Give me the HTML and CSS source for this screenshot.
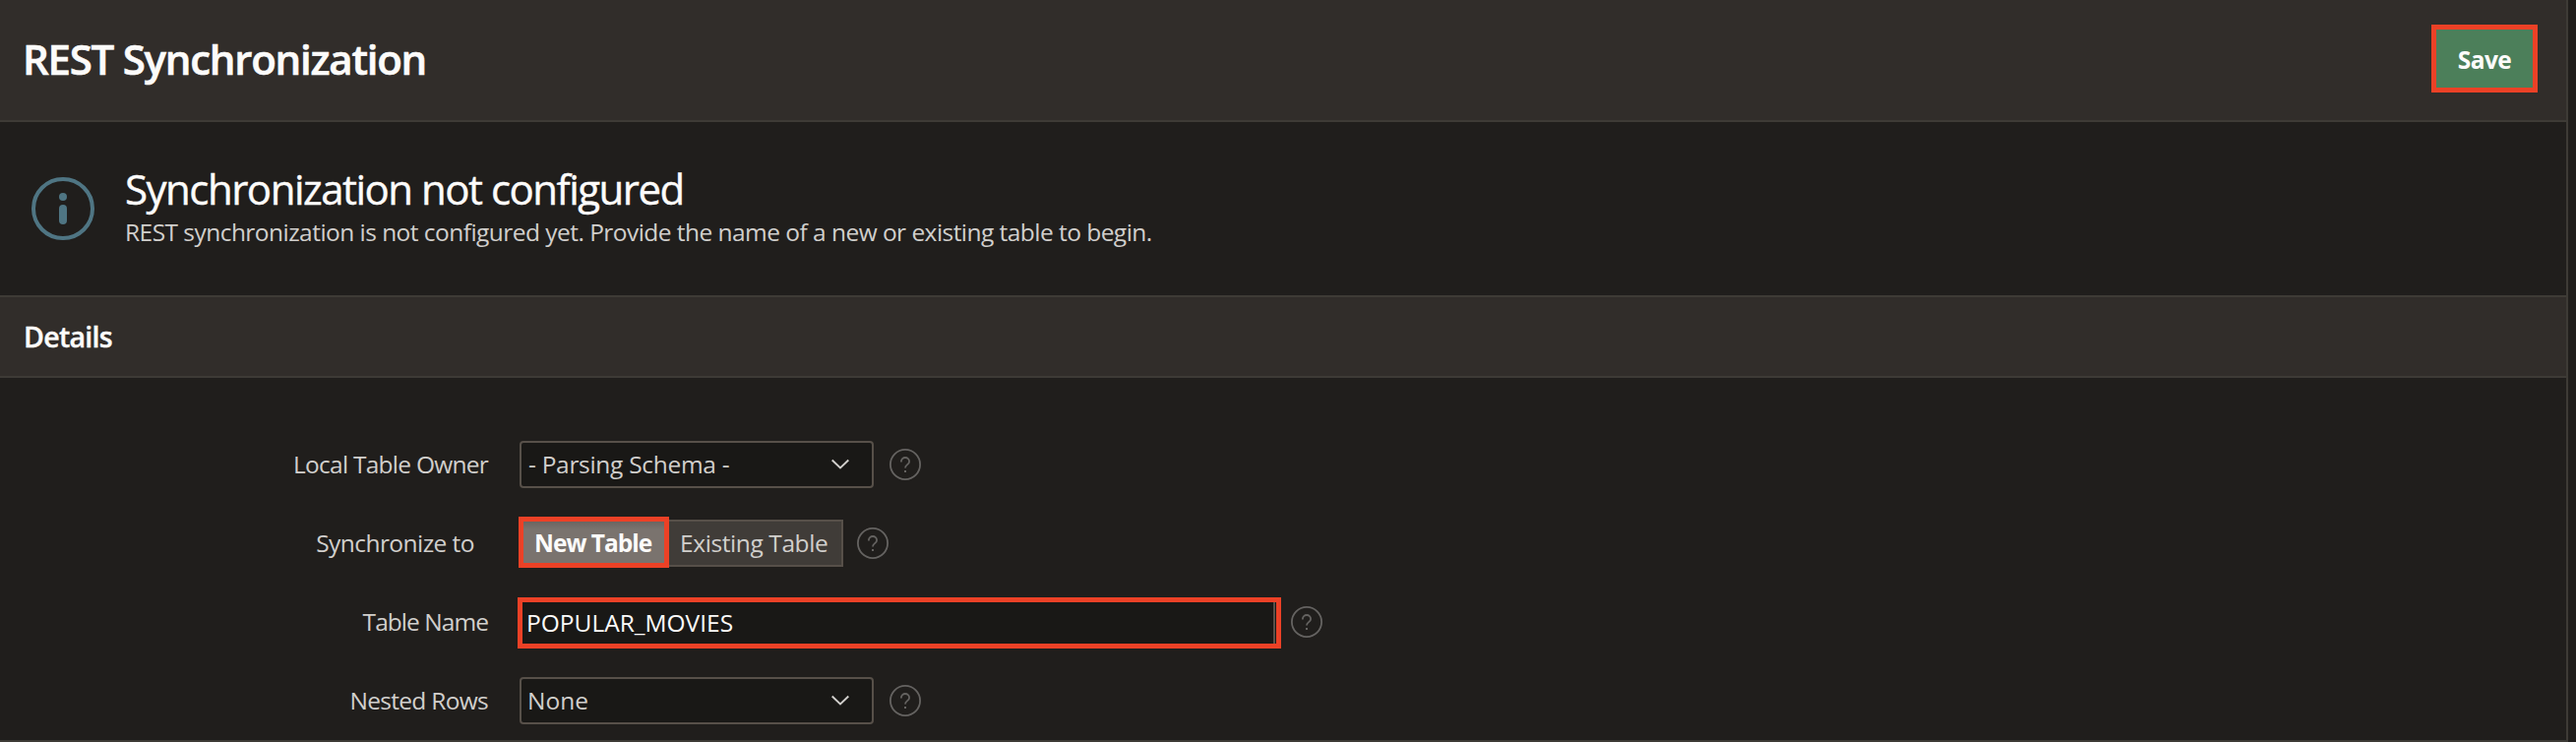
FILE: index.html
```
<!DOCTYPE html>
<html lang="en">
<head>
<meta charset="utf-8">
<title>REST Synchronization</title>
<link rel="stylesheet" href="styles.css">
</head>
<body>
<svg width="0" height="0" class="defs">
  <symbol id="help" viewBox="0 0 32 32">
    <circle cx="16" cy="16" r="15.1" fill="none" stroke="currentColor" stroke-width="1.8"/>
    <path d="M11.9 13.4V12.9A4.1 4.1 0 0 1 16 9a4.1 4.1 0 0 1 4.1 4c0 3.1-4.1 3.2-4.1 6.4" fill="none" stroke="currentColor" stroke-width="1.8"/>
    <rect x="15" y="22" width="2" height="2" fill="currentColor"/>
  </symbol>
  <symbol id="chevron" viewBox="0 0 20 12">
    <path d="M1.7 1.5 10 9.5l8.3-8" fill="none" stroke="currentColor" stroke-width="1.9"/>
  </symbol>
</svg>
<main class="panel">
  <header class="header">
    <h1 class="title">REST Synchronization</h1>
    <button class="save">Save</button>
  </header>
  <section class="alert">
    <svg class="info" viewBox="0 0 64 64">
      <circle cx="32" cy="32" r="30" fill="none" stroke="currentColor" stroke-width="4"/>
      <circle cx="32" cy="20" r="4" fill="currentColor"/>
      <rect x="28" y="28" width="8" height="20" rx="4" fill="currentColor"/>
    </svg>
    <div>
      <h2 class="alert-title">Synchronization not configured</h2>
      <p class="alert-text">REST synchronization is not configured yet. Provide the name of a new or existing table to begin.</p>
    </div>
  </section>
  <h3 class="details">Details</h3>
  <form class="form">
    <div class="row">
      <label class="label owner">Local Table Owner</label>
      <div class="select"><span class="schema">- Parsing Schema -</span><svg class="chevron"><use href="#chevron"/></svg></div>
      <svg class="help"><use href="#help"/></svg>
    </div>
    <div class="row">
      <label class="label sync">Synchronize to</label>
      <div class="toggle"><span class="on">New Table</span><span class="off">Existing Table</span></div>
      <svg class="help help-toggle"><use href="#help"/></svg>
    </div>
    <div class="row">
      <label class="label name">Table Name</label>
      <div class="field"><div class="input">POPULAR_MOVIES</div></div>
      <svg class="help help-field"><use href="#help"/></svg>
    </div>
    <div class="row">
      <label class="label nested">Nested Rows</label>
      <div class="select"><span>None</span><svg class="chevron"><use href="#chevron"/></svg></div>
      <svg class="help"><use href="#help"/></svg>
    </div>
  </form>
</main>
</body>
</html>
```
FILE: styles.css
```
* { box-sizing: border-box; }
body {
  margin: 0;
  height: 754px;
  overflow: hidden;
  background: #201e1c;
  color: #d1cfcc;
  font: 24.5px/37px "Open Sans", "Noto Sans", sans-serif;
}
h1, h2, h3, p { margin: 0; }
.defs { display: none; }
.panel {
  width: 2610px;
  height: 754px;
  border-right: 2px solid #3e3b36;
  border-bottom: 2px solid #3e3b36;
}
.header {
  display: flex;
  align-items: center;
  justify-content: space-between;
  height: 124px;
  padding: 0 29px 3px 23px;
  background: #312d2a;
  border-bottom: 2px solid #3e3b36;
}
.title {
  padding-top: 1px;
  color: #fcfbfa;
  font-size: 42px;
  font-weight: 600;
  line-height: 56px;
  letter-spacing: -1.25px;
  -webkit-text-stroke: .6px #fcfbfa;
}
.save {
  width: 108px;
  height: 69px;
  padding: 1px 0 0;
  background: #4c7f5a;
  border: 5px solid #ec4126;
  color: #fcfbfa;
  font: inherit;
  font-weight: 700;
  letter-spacing: -.5px;
}
.alert {
  display: flex;
  height: 176px;
  padding: 43px 0 0 32px;
}
.info {
  width: 64px;
  height: 64px;
  margin: 13px 31px 0 0;
  color: #4f7583;
}
.alert-title {
  color: #fcfbfa;
  font-size: 42px;
  font-weight: 400;
  line-height: 50px;
  letter-spacing: -1.5px;
  -webkit-text-stroke: .4px #fcfbfa;
}
.alert-text { letter-spacing: -.54px; }
.details {
  height: 84px;
  padding-left: 24px;
  background: #312d2a;
  border-top: 2px solid #3e3b36;
  border-bottom: 2px solid #3e3b36;
  color: #fcfbfa;
  font-size: 28.5px;
  font-weight: 600;
  line-height: 80px;
  letter-spacing: -.7px;
  -webkit-text-stroke: .4px #fcfbfa;
}
.form { padding-top: 48px; }
.row {
  display: flex;
  align-items: center;
  height: 80px;
}
.label {
  width: 526px;
  padding: 0 30px 2px 0;
  text-align: right;
  letter-spacing: -.55px;
}
.owner { letter-spacing: -.75px; }
.sync { padding-right: 44px; }
.name { letter-spacing: -.95px; }
.nested { letter-spacing: -.7px; }
.select {
  display: flex;
  align-items: center;
  justify-content: space-between;
  width: 360px;
  height: 48px;
  margin-left: 2px;
  padding: 0 22px 1px 6px;
  background: #191816;
  border: 2px solid #575049;
  border-radius: 4px;
}
.schema { padding-left: 1px; letter-spacing: -.3px; }
.chevron { width: 20px; height: 12px; color: #d1cfcc; }
.help { width: 32px; height: 32px; margin-left: 16px; color: #656361; }
.help-toggle { margin-left: 14px; }
.help-field { margin-left: 10px; }
.toggle {
  display: flex;
  align-items: center;
  margin: -2px 0 0 1px;
}
.on {
  width: 153px;
  height: 52px;
  padding-left: 11px;
  border: 5px solid #ec4126;
  background: linear-gradient(#6b6561, #7a736e 8px);
  color: #fcfbfa;
  font-weight: 700;
  line-height: 43px;
  letter-spacing: -1px;
  white-space: nowrap;
}
.off {
  width: 177px;
  height: 48px;
  padding-left: 11px;
  background: #403c38;
  border: 2px solid #575049;
  border-left: 0;
  line-height: 43px;
  letter-spacing: -.4px;
  margin-top: 2px;
}
.field {
  width: 776px;
  height: 52px;
  margin-top: 2px;
  padding-right: 1px;
  border: 5px solid #ec4126;
  background: #191816;
}
.input {
  height: 42px;
  padding-left: 4px;
  border-right: 2px solid #575049;
  color: #fcfbfa;
  line-height: 41px;
  letter-spacing: 0;
}
```
